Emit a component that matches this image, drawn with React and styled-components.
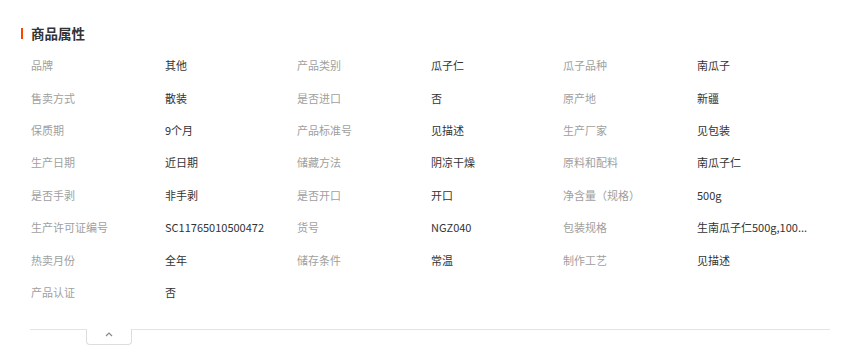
import React from "react";
import styled, { createGlobalStyle } from "styled-components";

const Global = createGlobalStyle`
  body {
    margin: 0;
    background: #fff;
    font-family: "Noto Sans CJK SC", "Noto Sans", sans-serif;
  }
`;

const Panel = styled.section`
  width: 858px;
  padding: 23px 28px 0 21px;
  box-sizing: border-box;
`;

const Title = styled.h3`
  display: flex;
  align-items: center;
  gap: 8px;
  margin: 0;
  height: 20px;
  font-size: 13.5px;
  font-weight: 700;
  color: #333;
  &::before {
    content: "";
    width: 2px;
    height: 11px;
    background: #ff4400;
  }
`;

const Grid = styled.dl`
  display: grid;
  grid-template-columns: repeat(3, 266px);
  grid-auto-rows: 32.4px;
  margin: 6px 0 0 10px;
  font-size: 11px;
`;

const Item = styled.div`
  display: flex;
  align-items: center;
  min-width: 0;
`;

const Label = styled.dt`
  width: 134px;
  flex: none;
  color: #a0a0a0;
`;

const Value = styled.dd`
  margin: 0;
  color: #333;
  white-space: nowrap;
`;

const Footer = styled.div`
  display: flex;
  box-sizing: border-box;
  margin: 21px 0 0 9px;
  width: 800px;
  border-top: 1px solid #e4e4e4;
  padding-left: 56px;
`;

const Toggle = styled.button`
  width: 46px;
  height: 16px;
  margin-top: -1px;
  padding: 0;
  display: flex;
  justify-content: center;
  align-items: flex-start;
  background: #fff;
  border: 1px solid #ddd;
  border-top: none;
  border-radius: 0 0 4px 4px;
  cursor: pointer;
  svg { margin-top: 2px; }
`;

const props = [
  ["品牌", "其他"], ["产品类别", "瓜子仁"], ["瓜子品种", "南瓜子"],
  ["售卖方式", "散装"], ["是否进口", "否"], ["原产地", "新疆"],
  ["保质期", "9个月"], ["产品标准号", "见描述"], ["生产厂家", "见包装"],
  ["生产日期", "近日期"], ["储藏方法", "阴凉干燥"], ["原料和配料", "南瓜子仁"],
  ["是否手剥", "非手剥"], ["是否开口", "开口"], ["净含量（规格）", "500g"],
  ["生产许可证编号", "SC11765010500472"], ["货号", "NGZ040"], ["包装规格", "生南瓜子仁500g,100..."],
  ["热卖月份", "全年"], ["储存条件", "常温"], ["制作工艺", "见描述"],
  ["产品认证", "否"],
];

export default function App() {
  return (
    <>
      <Global />
      <Panel>
        <Title>商品属性</Title>
        <Grid>
          {props.map(([k, v]) => (
            <Item key={k}>
              <Label>{k}</Label>
              <Value>{v}</Value>
            </Item>
          ))}
        </Grid>
        <Footer>
          <Toggle title="收起">
            <svg width="8" height="6" viewBox="0 0 8 6">
              <polyline points="1,5 4,2 7,5" fill="none" stroke="#888" strokeWidth="1.2" />
            </svg>
          </Toggle>
        </Footer>
      </Panel>
    </>
  );
}
